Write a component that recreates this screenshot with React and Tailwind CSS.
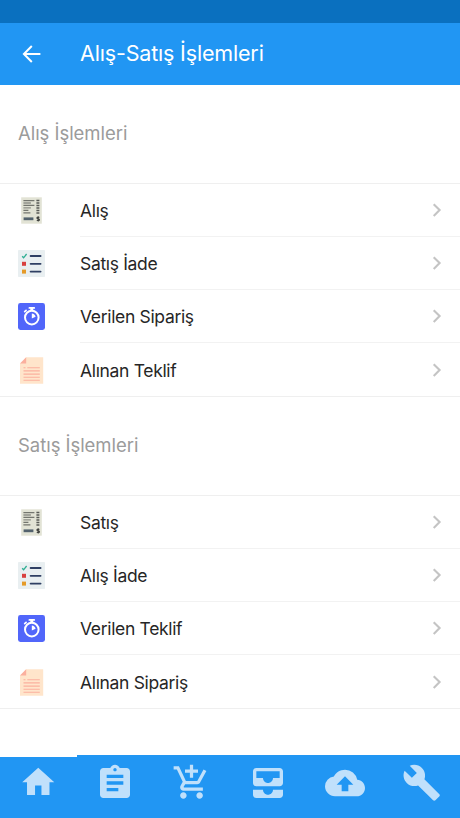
import React from 'react';
import { MdHome, MdAssignment, MdAddShoppingCart, MdAllInbox, MdBackup, MdBuild } from 'react-icons/md';

const ReceiptIcon = () => (
  <svg width="27" height="27" viewBox="0 0 27 27" fill="none">
    <path d="M3.2 .3h20.6v26.4H3.2z" fill="#e2e3d5" />
    <path d="M5.4 3.6h11M5.4 8.4h11M5.4 13.4h5M5.4 15.9h7" stroke="#74766f" strokeWidth="1.3" />
    <path d="M5.4 6h7.5M5.4 10.9h7.5" stroke="#8d8f87" strokeWidth="1.3" />
    <path d="M18.4 3.6h3M18.4 6h3M18.4 8.4h3M18.4 10.9h3M18.4 13.4h3M18.4 15.9h3" stroke="#595b57" strokeWidth="1.5" />
    <path d="M5.6 20.4h9.8v2.8H5.6z" fill="#53626d" />
    <path d="M21.4 20.5c-.8-.7-2.5-.5-2.5.5 0 1.2 2.6.6 2.6 1.8 0 1-1.8 1.1-2.7.3M20.2 19.2v5.2" stroke="#40423f" strokeWidth="1.1" />
  </svg>
);

const ChecklistIcon = () => (
  <svg width="27" height="27" viewBox="0 0 27 27" fill="none">
    <rect width="27" height="27" rx=".8" fill="#e9eff1" />
    <path d="m4.2 6.2 1.4 1.6L8.6 4" stroke="#2fae93" strokeWidth="1.3" />
    <path d="M4 11.8h4v4H4z" fill="#d8403f" />
    <path d="M4 19.6h4v4H4z" fill="#e59a28" />
    <path d="M12.6 6h10M12.6 13.8h10M12.6 21.6h10" stroke="#2f3f63" strokeWidth="1.8" strokeLinecap="round" />
  </svg>
);

const StopwatchIcon = () => (
  <svg width="27" height="27" viewBox="0 0 27 27" fill="none">
    <rect width="27" height="27" rx="2.4" fill="#5166fa" />
    <circle cx="13.8" cy="14.6" r="6.8" stroke="#fff" strokeWidth="2" />
    <path d="M11.4 4.9h4.8" stroke="#fff" strokeWidth="1.8" strokeLinecap="round" />
    <path d="M13.8 5v3" stroke="#fff" strokeWidth="3" />
    <path d="m6.7 8.7 1.4-1.4" stroke="#fff" strokeWidth="1.7" strokeLinecap="round" />
    <path d="M13.8 10.5a4.2 4.2 0 0 1 3.8 3.3l-3.8 1.6z" fill="#fff" />
  </svg>
);

const NoteIcon = () => (
  <svg width="27" height="27" viewBox="0 0 27 27" fill="none">
    <path d="M8.2.3h17v26.4H2V6.5z" fill="#ffe5cb" />
    <path d="M8.2.3v6.2H2z" fill="#fbb09e" />
    <path d="M5.5 10.7h2M9.3 10.7h12.5M5.5 13.9h16.3M5.5 17.1h16.3M5.5 20.3h16.3M5.5 23.2h16.3" stroke="#fbb09e" strokeWidth="1.1" />
  </svg>
);

const sections = [
  {
    title: 'Alış İşlemleri',
    items: [
      { label: 'Alış', Icon: ReceiptIcon },
      { label: 'Satış İade', Icon: ChecklistIcon },
      { label: 'Verilen Sipariş', Icon: StopwatchIcon },
      { label: 'Alınan Teklif', Icon: NoteIcon },
    ],
  },
  {
    title: 'Satış İşlemleri',
    items: [
      { label: 'Satış', Icon: ReceiptIcon },
      { label: 'Alış İade', Icon: ChecklistIcon },
      { label: 'Verilen Teklif', Icon: StopwatchIcon },
      { label: 'Alınan Sipariş', Icon: NoteIcon },
    ],
  },
];

const tabs = [
  { name: 'home', Icon: MdHome, size: 38.5 },
  { name: 'orders', Icon: MdAssignment, size: 40 },
  { name: 'cart', Icon: MdAddShoppingCart, size: 39 },
  { name: 'inbox', Icon: MdAllInbox, size: 40 },
  { name: 'backup', Icon: MdBackup, size: 40 },
  { name: 'tools', Icon: MdBuild, size: 39.5 },
];

const MenuRow = ({ item, last }) => (
  <li className="flex h-[53.3px] shrink-0 items-center pl-[18px]">
    <item.Icon />
    <div className={`ml-[35px] flex h-full flex-1 items-center justify-between pr-[18px] ${last ? '' : 'border-b border-[#f2f2f2]'}`}>
      <span className="pt-0.5 text-[17.5px] leading-6 tracking-[-0.33px] text-[#262626]">{item.label}</span>
      <svg width="10" height="14" viewBox="0 0 10 14" fill="none">
        <path d="m1.7 1.2 5.9 5.9L1.7 13" stroke="#c4c4c4" strokeWidth="2.1" />
      </svg>
    </div>
  </li>
);

const Section = ({ section }) => (
  <section>
    <h2 className="flex h-[98px] items-center pl-[18px] text-[18.5px] tracking-[-0.04px] text-[#9b9b9b]">
      {section.title}
    </h2>
    <ul className="flex h-[214px] flex-col border-y border-[#efefef]">
      {section.items.map((item, i) => (
        <MenuRow key={item.label} item={item} last={i === section.items.length - 1} />
      ))}
    </ul>
  </section>
);

export default function App() {
  return (
    <div className="flex h-[818px] w-full flex-col bg-white font-['Inter','Liberation_Sans',sans-serif]">
      <div className="h-[22.5px] shrink-0 bg-[#0a70bf]" />
      <header className="flex h-[62px] shrink-0 items-center bg-[#2196f3] pl-[22px] text-white">
        <svg width="20" height="20" viewBox="0 0 20 20" fill="none">
          <path d="M18.4 10H2.3M9.8 2 1.9 10l7.9 8" stroke="currentColor" strokeWidth="2" />
        </svg>
        <h1 className="ml-[38px] text-[21.5px] tracking-[-0.17px]">Alış-Satış İşlemleri</h1>
      </header>
      <main className="flex-1">
        {sections.map((section) => (
          <Section key={section.title} section={section} />
        ))}
      </main>
      <nav className="flex h-[63px] shrink-0 bg-[#2196f3]">
        {tabs.map(({ name, Icon, size }, i) => (
          <button
            key={name}
            className={`flex w-1/6 justify-center ${i === 0 ? 'border-t-2 border-white pt-[6px]' : 'pt-[7.5px]'} text-[#c0e0fb]`}
          >
            <Icon size={size} />
          </button>
        ))}
      </nav>
    </div>
  );
}
